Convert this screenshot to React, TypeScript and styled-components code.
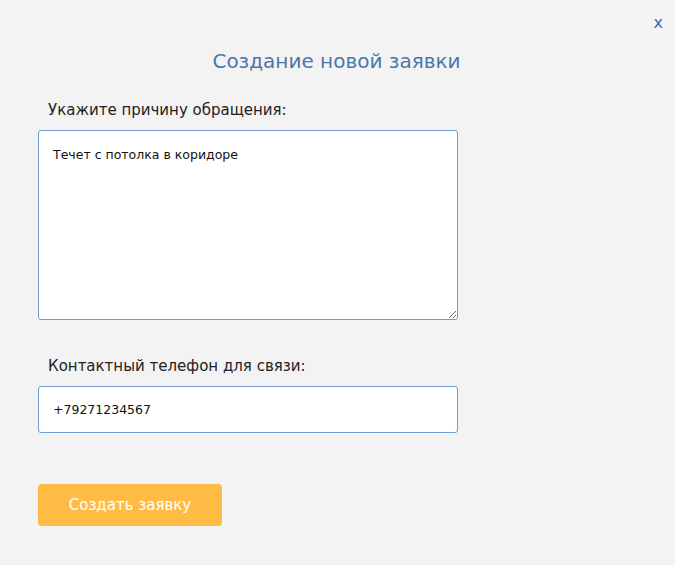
import React from "react";
import styled, { createGlobalStyle } from "styled-components";

const Global = createGlobalStyle`
  html, body { margin: 0; padding: 0; background: #f3f3f3; }
  body { font-family: "DejaVu Sans", sans-serif; }
`;

const Page = styled.div`
  position: relative;
  width: 675px;
  height: 565px;
  box-sizing: border-box;
  padding: 46px 0 0 38px;
  display: flex;
  flex-direction: column;
  background: #f3f3f3;
`;

const Close = styled.button`
  position: absolute;
  top: 13px;
  right: 12px;
  border: none;
  background: none;
  padding: 0;
  font-family: "DejaVu Sans", sans-serif;
  font-size: 16px;
  color: #3a6ea8;
  cursor: pointer;
`;

const Title = styled.h1`
  margin: 0;
  width: 597px;
  text-align: center;
  font-weight: normal;
  font-size: 20px;
  color: #4a78aa;
  line-height: 30px;
`;

const Label = styled.label<{ $top: number }>`
  display: block;
  margin: ${(p) => p.$top}px 0 0 10px;
  font-size: 15px;
  color: #222;
  line-height: 20px;
`;

const Area = styled.textarea`
  margin-top: 10px;
  width: 420px;
  height: 190px;
  box-sizing: border-box;
  border: 1px solid #6f9bd0;
  border-radius: 3px;
  background: #fff;
  padding: 16px 14px;
  font-family: "DejaVu Sans", sans-serif;
  font-size: 12.5px;
  color: #111;
  outline: none;
`;

const Input = styled.input`
  margin-top: 10px;
  width: 420px;
  height: 47px;
  box-sizing: border-box;
  border: 1px solid #6f9bd0;
  border-radius: 3px;
  background: #fff;
  padding: 0 14px;
  font-family: "DejaVu Sans", sans-serif;
  font-size: 12.5px;
  color: #111;
  outline: none;
`;

const Button = styled.button`
  margin-top: 51px;
  width: 184px;
  height: 42px;
  border: none;
  border-radius: 4px;
  background: #ffbb44;
  color: #fff;
  font-family: "DejaVu Sans", sans-serif;
  font-size: 15px;
  cursor: pointer;
`;

export default function App() {
  return (
    <>
      <Global />
      <Page>
        <Close>x</Close>
        <Title>Создание новой заявки</Title>
        <Label $top={24}>Укажите причину обращения:</Label>
        <Area defaultValue="Течет с потолка в коридоре" />
        <Label $top={36}>Контактный телефон для связи:</Label>
        <Input defaultValue="+79271234567" autoFocus />
        <Button>Создать заявку</Button>
      </Page>
    </>
  );
}
